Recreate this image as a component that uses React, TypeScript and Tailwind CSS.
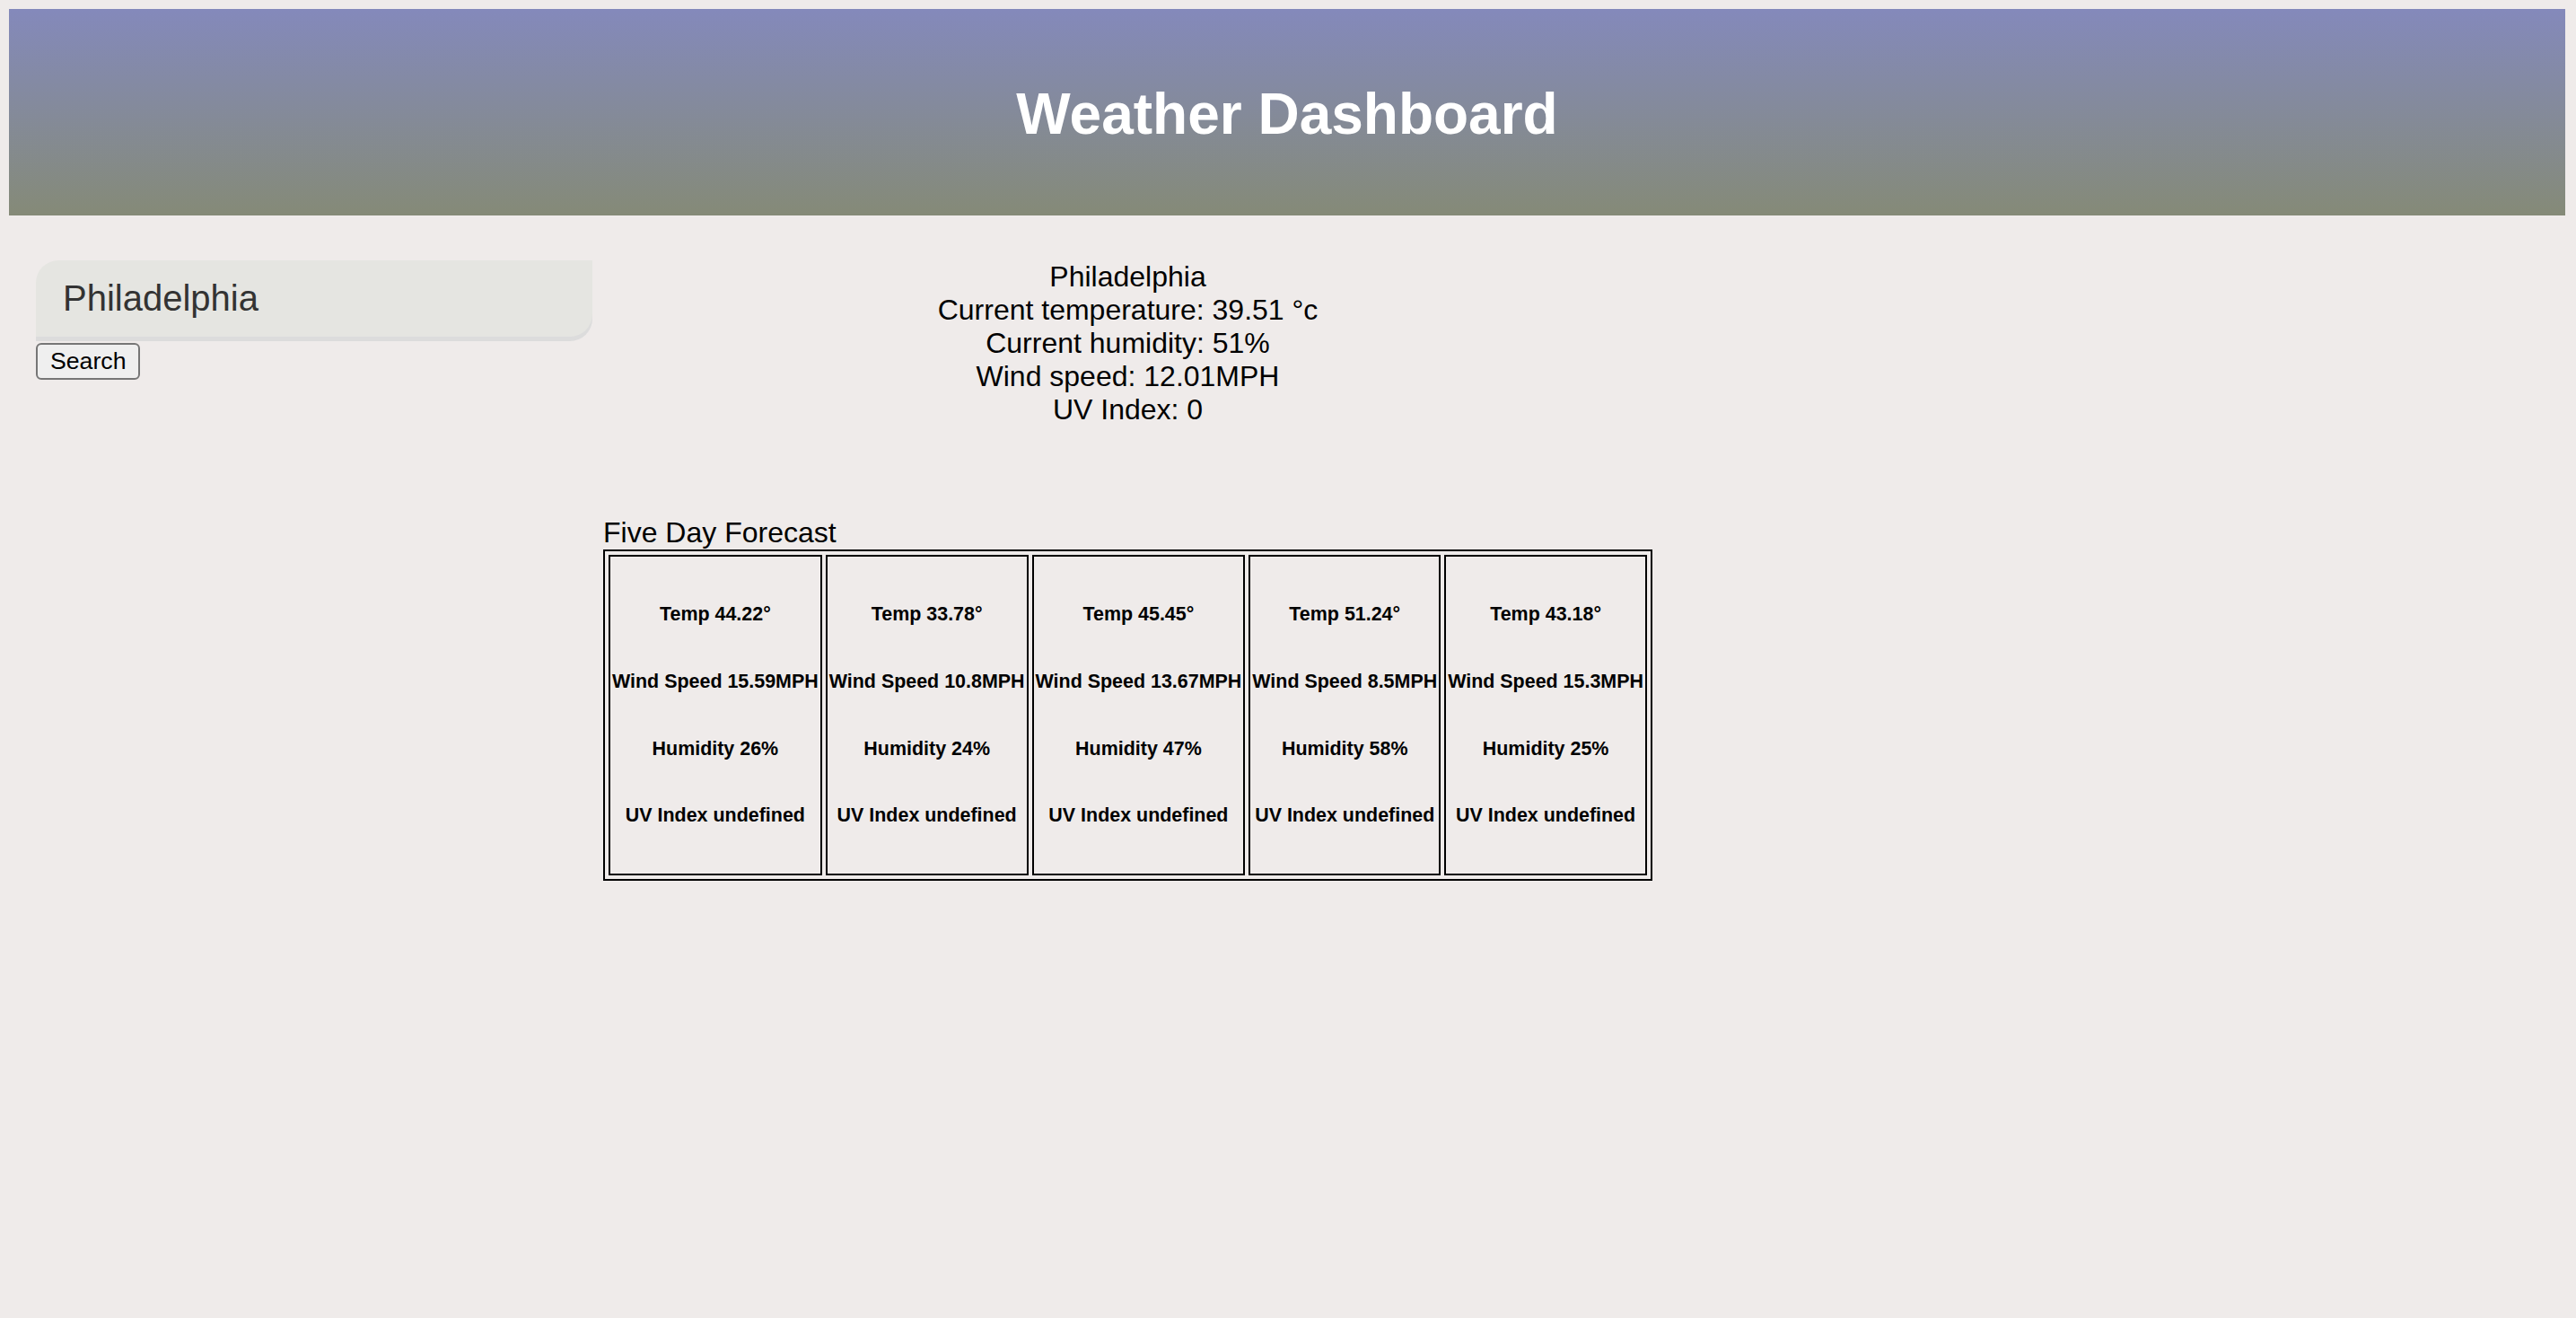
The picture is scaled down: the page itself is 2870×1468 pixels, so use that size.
const forecast = [
    { temp: '44.22', wind: '15.59', humidity: '26' },
    { temp: '33.78', wind: '10.8', humidity: '24' },
    { temp: '45.45', wind: '13.67', humidity: '47' },
    { temp: '51.24', wind: '8.5', humidity: '58' },
    { temp: '43.18', wind: '15.3', humidity: '25' },
];

export default function App() {
    return (
        <div className="min-h-screen bg-[#efebea] pt-[10px] font-['Liberation_Sans',Arial,sans-serif] text-black">
            {/* Header */}
            <header className="ml-[10px] mr-[12px] h-[230px] flex items-center justify-center pt-[3px] bg-gradient-to-b from-[#8489bb] to-[#858a77]">
                <h1 className="text-[64px] leading-[74px] font-bold text-white">Weather Dashboard</h1>
            </header>

            <main className="flex pt-[50px]">
                {/* Search */}
                <div className="w-[672px] shrink-0 pl-[40px]">
                    <input
                        type="text"
                        defaultValue="Philadelphia"
                        className="block w-[620px] h-[85px] pl-[30px] bg-[#e5e5e1] text-[40px] text-[#333] rounded-tl-[25px] rounded-br-[25px] shadow-[0_5px_0_#dcdcdc] outline-none"
                    />
                    <button className="mt-[7px] px-[14px] py-[3px] text-[26.67px] leading-[31px] bg-[#efefef] border-2 border-[#767676] rounded-[6px]">
                        Search
                    </button>
                </div>

                {/* Current weather + forecast */}
                <div className="w-fit flex flex-col">
                    <div className="text-center text-[32px] leading-[37px]">
                        <div>Philadelphia</div>
                        <div>Current temperature: 39.51 °c</div>
                        <div>Current humidity: 51%</div>
                        <div>Wind speed: 12.01MPH</div>
                        <div>UV Index: 0</div>
                    </div>

                    <div className="mt-[100px] text-[32px] leading-[37px]">Five Day Forecast</div>
                    <table className="border-separate border-spacing-[4px] border-2 border-black">
                        <tbody>
                            <tr>
                                {forecast.map((day, i) => (
                                    <td key={i} className="border-2 border-black p-[2px] text-center align-middle">
                                        <h6 className="my-[50px] text-[21.44px] leading-[24.8px] font-bold whitespace-nowrap">Temp {day.temp}°</h6>
                                        <h6 className="my-[50px] text-[21.44px] leading-[24.8px] font-bold whitespace-nowrap">Wind Speed {day.wind}MPH</h6>
                                        <h6 className="my-[50px] text-[21.44px] leading-[24.8px] font-bold whitespace-nowrap">Humidity {day.humidity}%</h6>
                                        <h6 className="my-[50px] text-[21.44px] leading-[24.8px] font-bold whitespace-nowrap">UV Index undefined</h6>
                                    </td>
                                ))}
                            </tr>
                        </tbody>
                    </table>
                </div>
            </main>
        </div>
    );
}
